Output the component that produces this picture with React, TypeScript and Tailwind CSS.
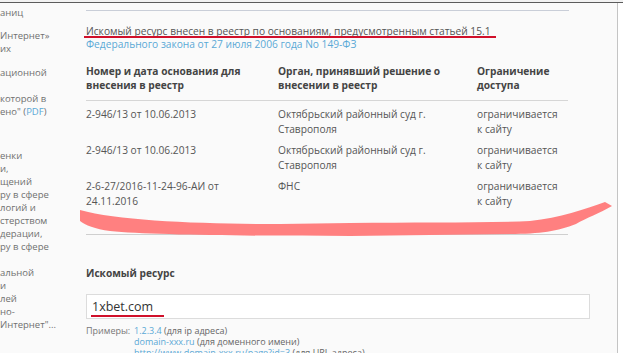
import React from 'react';

const sideGroups: { mt: string; lines: React.ReactNode[] }[] = [
  { mt: 'mt-[3px]', lines: ['аниц'] },
  { mt: 'mt-[10px]', lines: ['Интернет»', 'их'] },
  { mt: 'mt-[11px]', lines: ['ационной'] },
  {
    mt: 'mt-[13px]',
    lines: [
      'которой в',
      <>
        ено" (<span className="text-[#5aa9d6]">PDF</span>)
      </>,
    ],
  },
  {
    mt: 'mt-[31px]',
    lines: ['енки', 'и,', 'щений', 'ру в сфере', 'логий и', 'стерством', 'дерации,', 'ру в сфере'],
  },
  { mt: 'mt-[13px]', lines: ['альной', 'и', 'лей', 'но-', 'Интернет"...'] },
];

const rows = [
  ['2-946/13 от 10.06.2013', 'Октябрьский районный суд г. Ставрополя', 'ограничивается к сайту'],
  ['2-946/13 от 10.06.2013', 'Октябрьский районный суд г. Ставрополя', 'ограничивается к сайту'],
  ['2-6-27/2016-11-24-96-АИ от 24.11.2016', 'ФНС', 'ограничивается к сайту'],
];

const App = () => {
  return (
    <div
      className="relative w-[623px] h-[353px] overflow-hidden bg-[#f4f4f4] text-[#555]"
      style={{ fontFamily: '"Open Sans", "Noto Sans", sans-serif' }}
    >
      <div className="h-[2px] bg-[#f2f2f2]" />
      <div className="flex h-full border-t-[1.5px] border-[#5c5c5c]">
        <div className="flex w-[618px] shrink-0 bg-[#fafafa] border-r border-[#c4c4c4]">
          {/* sidebar, cut at the left */}
          <div className="w-[84px] shrink-0 overflow-hidden text-[9.5px] leading-[13px] text-[#707070]">
            {sideGroups.map((g, i) => (
              <div key={i} className={g.mt}>
                {g.lines.map((l, j) => (
                  <div key={j} className="whitespace-nowrap">
                    {l}
                  </div>
                ))}
              </div>
            ))}
          </div>

          {/* main column */}
          <div className="flex-1 pl-[2px]">
            <div className="mt-[7px] h-px w-[483px] bg-[#c9ced8]" />

            <div className="mt-[14px] text-[10.2px] leading-[13px]">
              <div className="relative inline-block whitespace-nowrap">
                Искомый ресурс внесен в реестр по основаниям, предусмотренным статьей 15.1
                <div className="absolute left-[-2px] top-[11px] h-[2px] w-[412px] bg-[#d0102a]" />
              </div>
              <div className="text-[#5aa9d6]">Федерального закона от 27 июля 2006 года No 149-ФЗ</div>
            </div>

            <div className="mt-[13px] w-[482px]">
              <div className="grid grid-cols-[192px_199px_1fr] pb-[8px] text-[10.2px] leading-[14px] font-bold text-[#444]">
                <div>Номер и дата основания для внесения в реестр</div>
                <div>Орган, принявший решение о внесении в реестр</div>
                <div>Ограничение доступа</div>
              </div>
              <div className="h-px bg-[#d6d6d6]" />
              <div className="pt-[6px]">
                {rows.map((r, i) => (
                  <div key={i} className="grid grid-cols-[192px_199px_1fr] pb-[7px] text-[10.2px] leading-[14.5px]">
                    <div className="pr-[40px]">{r[0]}</div>
                    <div className="pr-[30px]">{r[1]}</div>
                    <div className="pr-[8px]">{r[2]}</div>
                  </div>
                ))}
              </div>
              <div className="mt-[19px] h-px bg-[#cfcfcf]" />
            </div>

            <div className="mt-[31px] text-[10.2px] leading-[14px] font-bold text-[#444]">Искомый ресурс</div>

            <div className="mt-[14px] flex h-[25px] w-[504px] items-center border border-[#dcdcdc] bg-white pl-[5px]">
              <span className="relative text-[12.5px] leading-[16px] text-[#333]">
                1xbet.com
                <span className="absolute left-[-1px] top-[16px] h-[2px] w-[73px] bg-[#d0102a]" />
              </span>
            </div>

            <div className="mt-[6px] grid grid-cols-[48px_1fr] text-[9px] leading-[11px] text-[#666]">
              <div className="text-[#777]">Примеры:</div>
              <div>
                <div>
                  <span className="text-[#5aa9d6]">1.2.3.4</span> (для ip адреса)
                </div>
                <div>
                  <span className="text-[#5aa9d6]">domain-xxx.ru</span> (для доменного имени)
                </div>
                <div className="whitespace-nowrap">
                  <span className="text-[#5aa9d6]">http://www.domain-xxx.ru/page?id=3</span> (для URL адреса)
                </div>
              </div>
            </div>
          </div>
        </div>
        <div className="flex-1 bg-white" />
      </div>

      {/* red marker stroke over the table */}
      <svg className="pointer-events-none absolute inset-0" width="623" height="353" viewBox="0 0 623 353">
        <path
          d="M80,210 C120,221 200,224 280,224 L350,223 C420,222 480,223 530,221 C560,218 585,209 605,202 L612,206 C600,213 586,218 576,224 C558,231 540,234 510,234 L350,236 C250,236 150,235 110,231 C95,229 85,225 80,221 Z"
          fill="#ff8080"
        />
      </svg>
    </div>
  );
};

export default App;
